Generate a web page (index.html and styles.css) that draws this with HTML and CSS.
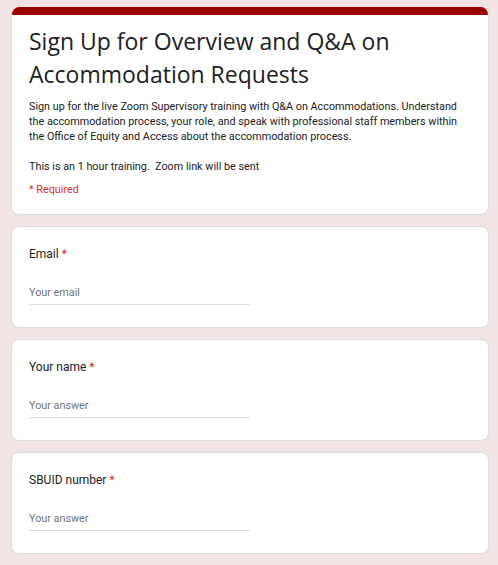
FILE: index.html
```html
<!DOCTYPE html>
<html>
<head>
<meta charset="utf-8">
<link rel="stylesheet" href="styles.css">
</head>
<body>
<div class="form">
  <div class="card header">
    <div class="bar"></div>
    <div class="header-body">
      <h1 class="title">Sign Up for Overview and Q&amp;A on Accommodation Requests</h1>
      <p class="desc">Sign up for the live Zoom Supervisory training with Q&amp;A on Accommodations. Understand the accommodation process, your role, and speak with professional staff members within the Office of Equity and Access about the accommodation process.</p>
      <p class="desc spaced">This is an 1 hour training.&nbsp; Zoom link will be sent</p>
      <div class="required">* Required</div>
    </div>
  </div>

  <div class="card question">
    <div class="label">Email <span class="star">*</span></div>
    <div class="input">Your email</div>
  </div>

  <div class="card question">
    <div class="label">Your name <span class="star">*</span></div>
    <div class="input">Your answer</div>
  </div>

  <div class="card question">
    <div class="label">SBUID number <span class="star">*</span></div>
    <div class="input">Your answer</div>
  </div>

  <div class="card question"></div>
</div>
</body>
</html>
```

FILE: styles.css
```css
html, body {
  margin: 0;
  padding: 0;
  background: #f2e4e4;
  font-family: Roboto, "Liberation Sans", Arial, sans-serif;
  color: #202124;
}

.form {
  width: 478px;
  margin-left: 11px;
  padding-top: 7px;
  display: flex;
  flex-direction: column;
  gap: 11px;
}

.card {
  background: #fff;
  border: 1px solid #dadce0;
  border-radius: 8px;
  box-sizing: border-box;
  overflow: hidden;
}

.header {
  border-top: none;
}

.bar {
  height: 8px;
  background: #990000;
}

.header-body {
  padding: 10px 18px 17px 17px;
}

.title {
  margin: 0;
  font-family: "Open Sans", Roboto, sans-serif;
  font-weight: 400;
  font-size: 23px;
  line-height: 33px;
  color: #202124;
  letter-spacing: 0;
}

.desc {
  margin: 8px 0 0 0;
  font-size: 10.8px;
  line-height: 15px;
  color: #202124;
}

.desc.spaced {
  margin-top: 15px;
}

.required {
  margin-top: 8px;
  font-size: 10.8px;
  line-height: 15px;
  color: #d93025;
}

.question {
  height: 102px;
  padding: 18px 17px 0 17px;
}

.label {
  font-size: 12px;
  line-height: 18px;
  color: #202124;
}

.star {
  color: #d93025;
}

.input {
  margin-top: 22px;
  width: 221px;
  font-size: 10.8px;
  line-height: 16px;
  padding-bottom: 3px;
  color: #70757a;
  border-bottom: 1px solid #dadce0;
}
```
